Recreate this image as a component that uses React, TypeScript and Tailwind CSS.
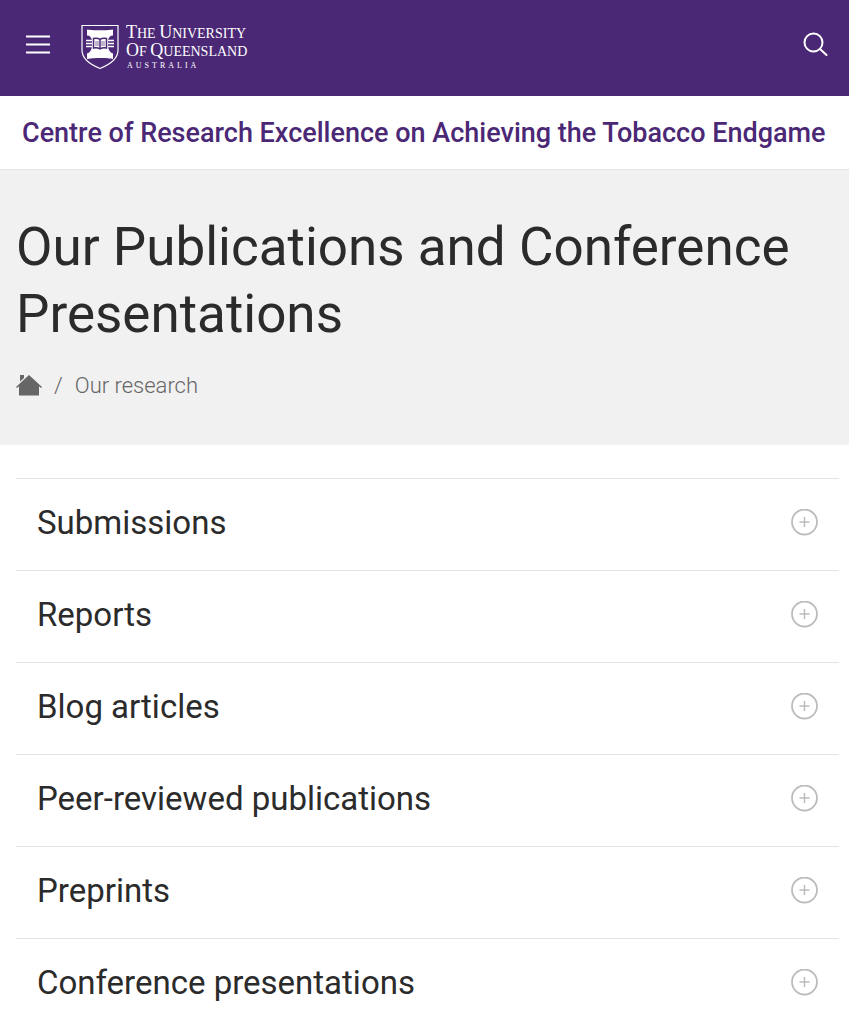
import { useState } from 'react';

const SECTIONS = [
  'Submissions',
  'Reports',
  'Blog articles',
  'Peer-reviewed publications',
  'Preprints',
  'Conference presentations',
];

function Crest() {
  return (
    <svg width="38" height="46" viewBox="0 0 38 46" fill="none" aria-hidden="true">
      <path d="M1 1.500h36v24.500c0 9-8 14.500-18 18.500C9 40.500 1 35 1 26Z" stroke="#fff" strokeWidth="1.200" />
      <path
        d="M6 5.500c4 1 22 1 26 0v6c-3 0-4.500 2-5 5v6c.5 4 2.500 6.500 5 7v5.500c-4-1.500-22-1.500-26 0V29.500c2.500-.5 4.500-3 5-7v-6c-.5-3-2-5-5-5Z"
        fill="#fff"
      />
      <path d="M5 16.500h7M5 19.500h7M5 22.500h7M26 16.500h7M26 19.500h7M26 22.500h7" stroke="#fff" strokeWidth="1.500" />
      <path d="M12.500 14.500c2.500-.6 4.500-.4 6.500.8 2-1.200 4-1.400 6.500-.8v9.500c-2.500-.6-4.500-.4-6.500.8-2-1.200-4-1.400-6.500-.8Z" fill="#fff" stroke="#4b2876" strokeWidth="1.500" />
      <path d="M19 15v9.500" stroke="#4b2876" strokeWidth="1.500" />
      <path d="M15 17v5M17 17v5M21 17v5M23 17v5" stroke="#4b2876" strokeWidth=".7" />
    </svg>
  );
}

function Logo() {
  return (
    <a href="#home" className="flex gap-[7px] text-white" aria-label="The University of Queensland, Australia">
      <Crest />
      <span className="flex flex-col font-['Liberation_Serif',serif] text-[14px] leading-[17px] whitespace-nowrap">
        <span>
          <span className="text-[18px]">T</span>HE <span className="text-[18px]">U</span>NIVERSITY
        </span>
        <span>
          <span className="text-[18px]">O</span>F <span className="text-[18px]">Q</span>UEENSLAND
        </span>
        <span className="pl-px text-[8px] leading-[12px] tracking-[3px]">AUSTRALIA</span>
      </span>
    </a>
  );
}

function Header() {
  return (
    <header className="flex h-24 items-start bg-[#4b2876] pt-6 pr-5 pl-[26px] text-white">
      <button type="button" aria-label="Menu" className="mt-2 mr-[31px] cursor-pointer">
        <svg width="24" height="24" viewBox="0 0 24 24" stroke="currentColor" strokeWidth="2" aria-hidden="true">
          <path d="M0 4.500h24M0 12.500h24M0 20.500h24" />
        </svg>
      </button>
      <Logo />
      <button type="button" aria-label="Search" className="mt-2 ml-auto cursor-pointer">
        <svg width="26" height="26" viewBox="0 0 26 26" fill="none" stroke="currentColor" strokeWidth="2" strokeLinecap="round" aria-hidden="true">
          <circle cx="10.500" cy="10.500" r="9" />
          <path d="m17 17 6.500 6" />
        </svg>
      </button>
    </header>
  );
}

function Section({ title }: { title: string }) {
  const [open, setOpen] = useState(false);

  return (
    <li className="border-t border-[#e4e4e4]">
      <h2>
        <button
          type="button"
          aria-expanded={open}
          onClick={() => setOpen(!open)}
          className="flex w-full cursor-pointer items-center justify-between pt-5 pr-5 pb-6 pl-[21px] text-left text-[33px] leading-[47px] text-[#2b2b2b]"
        >
          {title}
          <svg width="28" height="28" viewBox="0 0 28 28" fill="none" stroke="#bcbcbc" className="shrink-0" aria-hidden="true">
            <circle cx="13.500" cy="13" r="12.500" strokeWidth="1.800" />
            <path d={open ? 'M8.500 13h10' : 'M8.500 13h10M13.500 8v10'} strokeWidth="1.500" />
          </svg>
        </button>
      </h2>
    </li>
  );
}

export default function App() {
  return (
    <div className="min-h-screen bg-white font-[Roboto,sans-serif] text-[#2b2b2b]">
      <Header />
      <div className="border-b border-[#e4e4e4] px-[22px] pt-[17px] pb-[15px]">
        <a href="#centre" className="block text-[27px] leading-[41px] font-medium whitespace-nowrap text-[#4b2876]">
          Centre of Research Excellence on Achieving the Tobacco Endgame
        </a>
      </div>
      <div className="bg-[#f1f1f1] px-4 pt-11 pb-[45px]">
        <h1 className="text-[53px] leading-[67px]">Our Publications and Conference Presentations</h1>
        <nav aria-label="Breadcrumb" className="mt-[23px] flex items-center text-[22px] leading-[29px] font-light text-[#666]">
          <a href="#home" aria-label="Home">
            <svg width="26" height="22" viewBox="0 0 26 22" fill="#666" aria-hidden="true">
              <path d="M4 0h4v3L4 6.500ZM13 0l13 12-1 1L23 11.300v9.200H3v-9.200L1 13l-1-1Z" />
            </svg>
          </a>
          <span className="mx-3">/</span>
          <a href="#research">Our research</a>
        </nav>
      </div>
      <main className="pt-[33px] pr-[10px] pl-4">
        <ul>
          {SECTIONS.map((s) => (
            <Section key={s} title={s} />
          ))}
        </ul>
      </main>
    </div>
  );
}
